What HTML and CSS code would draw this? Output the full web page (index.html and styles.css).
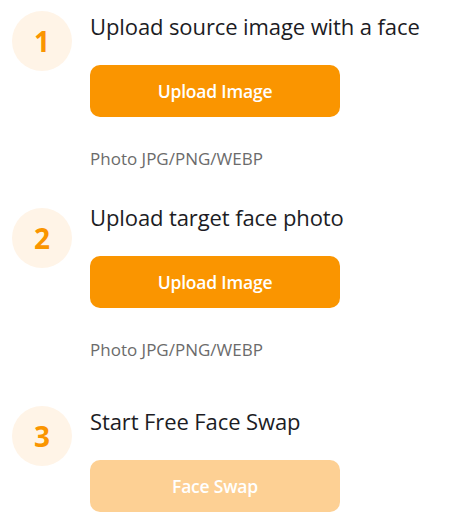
FILE: index.html
```html
<!DOCTYPE html>
<html lang="en">
<head>
<meta charset="utf-8">
<title>Face Swap</title>
<link rel="stylesheet" href="styles.css">
</head>
<body>
<div class="steps">
  <div class="step">
    <div class="num">1</div>
    <div class="content">
      <div class="title">Upload source image with a face</div>
      <button class="btn">Upload Image</button>
      <div class="note">Photo JPG/PNG/WEBP</div>
    </div>
  </div>
  <div class="step step-2">
    <div class="num">2</div>
    <div class="content">
      <div class="title">Upload target face photo</div>
      <button class="btn">Upload Image</button>
      <div class="note">Photo JPG/PNG/WEBP</div>
    </div>
  </div>
  <div class="step step-3">
    <div class="num">3</div>
    <div class="content">
      <div class="title">Start Free Face Swap</div>
      <button class="btn btn-disabled">Face Swap</button>
    </div>
  </div>
</div>
</body>
</html>
```
FILE: styles.css
```css
html, body {
  margin: 0;
  padding: 0;
  background: #ffffff;
}
body {
  font-family: "Open Sans", Lato, sans-serif;
}
.steps {
  padding: 11px 0 0 12px;
  display: flex;
  flex-direction: column;
}
.step {
  display: flex;
  align-items: flex-start;
  gap: 18px;
}
.step-2 {
  margin-top: 35px;
}
.step-3 {
  margin-top: 46px;
}
.num {
  flex: none;
  width: 60px;
  height: 60px;
  border-radius: 50%;
  background: #fff4e7;
  color: #fa9500;
  font-weight: 700;
  font-size: 28px;
  display: flex;
  align-items: center;
  justify-content: center;
}
.step-2 .num {
  margin-top: 4px;
}
.step-2 .title {
  margin-top: 0;
}
.content {
  display: flex;
  flex-direction: column;
  align-items: flex-start;
}
.title {
  margin-top: 2px;
  font-size: 22px;
  line-height: 26px;
  letter-spacing: -0.1px;
  color: #1c1c24;
  white-space: nowrap;
}
.btn {
  margin-top: 26px;
  width: 250px;
  height: 52px;
  border: none;
  border-radius: 10px;
  background: #fa9500;
  color: #ffffff;
  font-family: inherit;
  font-weight: 600;
  font-size: 17.5px;
  letter-spacing: -0.2px;
  padding: 0;
  cursor: pointer;
}
.btn-disabled {
  background: #fdd094;
}
.note {
  margin-top: 32px;
  font-size: 17px;
  line-height: 20px;
  color: #6b6b6b;
  white-space: nowrap;
}
```
